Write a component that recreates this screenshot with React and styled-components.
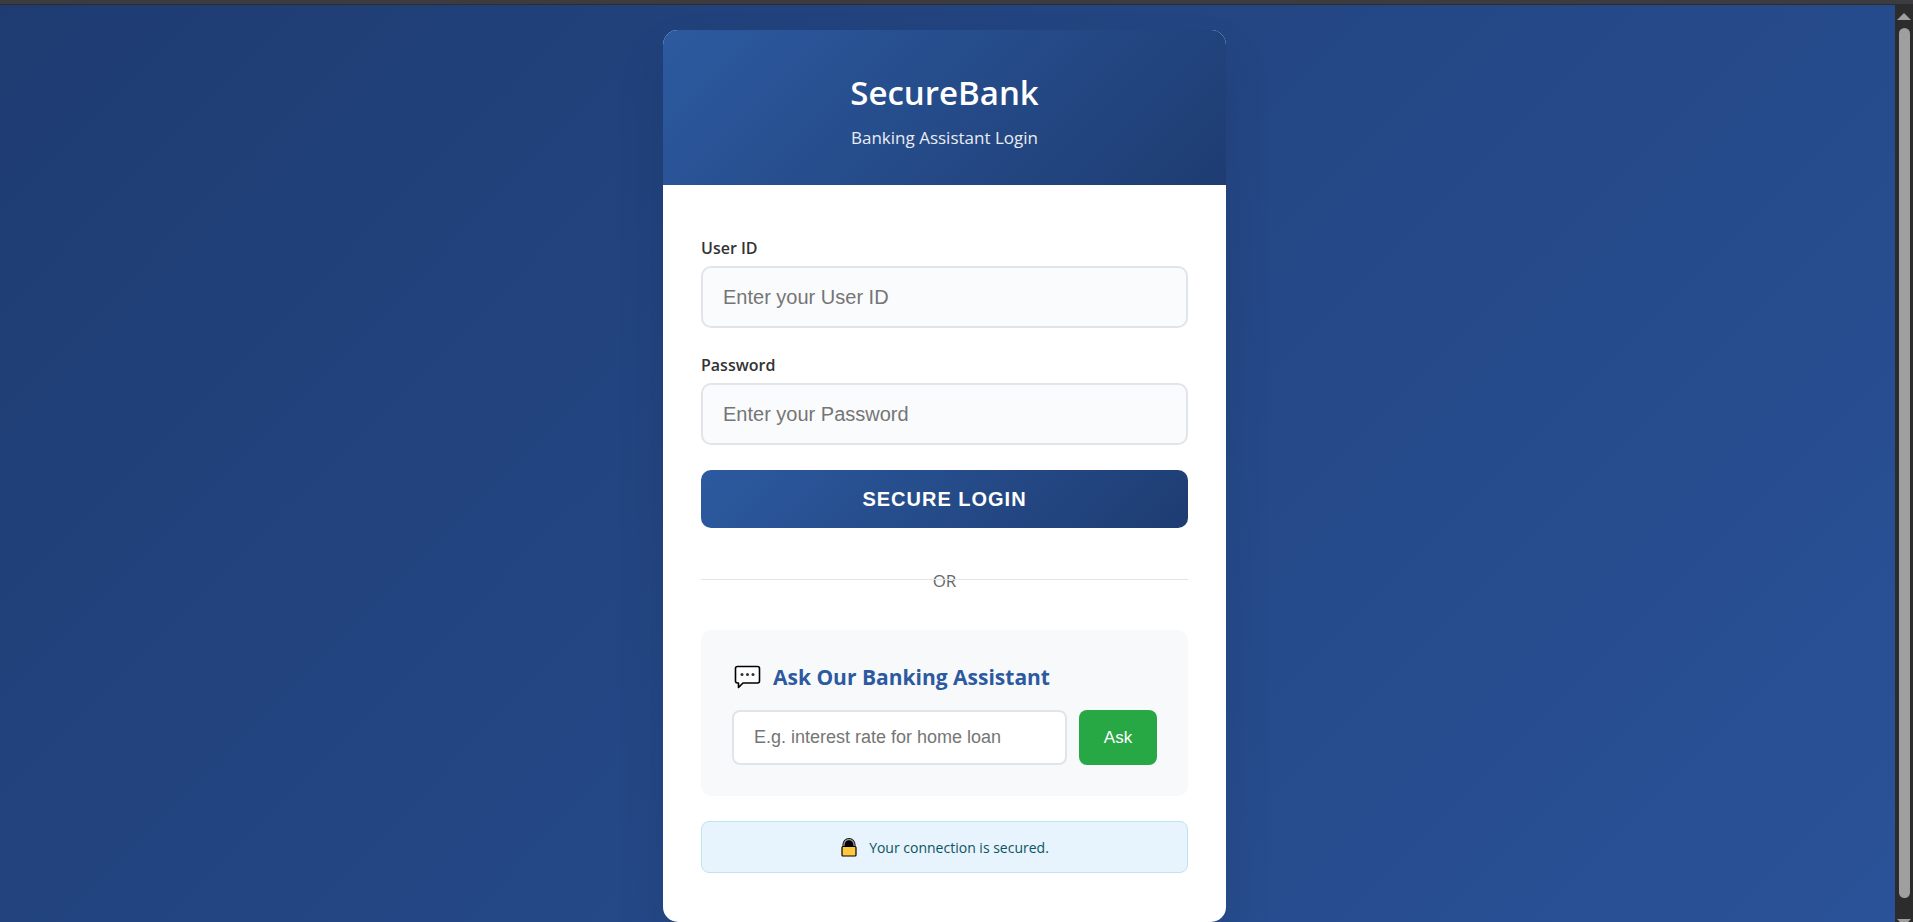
import React from "react";
import styled, { createGlobalStyle } from "styled-components";

const GlobalStyle = createGlobalStyle`
  *, *::before, *::after { box-sizing: border-box; }
  body {
    margin: 0;
    font-family: "Segoe UI", "Open Sans", "Noto Sans", sans-serif;
    color: #333;
  }
  h1, h2, p { margin: 0; }
`;

const Frame = styled.div`
  display: flex;
  flex-direction: column;
  min-height: 100vh;
`;

const TopEdge = styled.div`
  height: 5px;
  background: #3c3b40;
  border-bottom: 1px solid #2c2b2e;
`;

const Viewport = styled.div`
  flex: 1;
  display: flex;
`;

const Page = styled.main`
  flex: 1;
  display: flex;
  justify-content: center;
  align-items: flex-start;
  padding: 25px 6px 0 0;
  background: linear-gradient(135deg, #1e3c72 0%, #2a5298 100%);
`;

const ScrollTrack = styled.div`
  width: 18px;
  display: flex;
  flex-direction: column;
  align-items: center;
  gap: 8px;
  padding-top: 8px;
  background: #2c2c2c;
`;

const ScrollThumb = styled.div`
  flex: 1;
  width: 11px;
  margin-bottom: 13px;
  border-radius: 6px;
  background: #9f9f9f;
`;

const ScrollEnd = styled.div`
  height: 3px;
  overflow: hidden;
  svg { display: block; }
`;

const Card = styled.section`
  width: 100%;
  max-width: 563px;
  overflow: hidden;
  border-radius: 15px;
  background: #fff;
  box-shadow: 0 25px 50px rgba(0, 0, 0, 0.1);
`;

const CardHeader = styled.header`
  padding: 38px 38px 35px;
  text-align: center;
  color: #fff;
  background: linear-gradient(135deg, #2c5aa0 0%, #1e3c72 100%);
`;

const Brand = styled.h1`
  font-size: 33px;
  line-height: 50px;
  font-weight: 600;
`;

const Tagline = styled.p`
  font-size: 17px;
  line-height: 24px;
  margin-top: 8px;
  opacity: 0.9;
`;

const CardBody = styled.div`
  padding: 51px 38px 49px;
`;

const Field = styled.div`
  display: flex;
  flex-direction: column;
  gap: 6px;
  margin-bottom: 25px;
`;

const Label = styled.label`
  font-size: 16px;
  line-height: 24px;
  font-weight: 600;
`;

const TextInput = styled.input`
  width: 100%;
  min-width: 0;
  height: ${(p) => (p.$compact ? 55 : 62)}px;
  padding: 0 20px;
  border: 2px solid #e1e5e9;
  border-radius: ${(p) => (p.$compact ? 8 : 10)}px;
  background: ${(p) => (p.$compact ? "#fff" : "#fafbfc")};
  font-family: "Liberation Sans", Arial, sans-serif;
  font-size: ${(p) => (p.$compact ? 18 : 20)}px;
  color: #333;
  &::placeholder { color: #757575; opacity: 1; }
`;

const LoginButton = styled.button`
  width: 100%;
  height: 58px;
  border: 0;
  border-radius: 10px;
  color: #fff;
  background: linear-gradient(135deg, #2c5aa0 0%, #1e3c72 100%);
  font: 700 20px "Liberation Sans", Arial, sans-serif;
  letter-spacing: 1px;
  text-transform: uppercase;
  cursor: pointer;
`;

const Divider = styled.div`
  position: relative;
  margin: 38px 0;
  padding-top: 4px;
  font-size: 17px;
  line-height: 22px;
  text-align: center;
  color: #666;
  &::before {
    content: "";
    position: absolute;
    top: 50%;
    left: 0;
    right: 0;
    height: 1px;
    background: #e1e5e9;
  }
`;

const Assistant = styled.section`
  padding: 31px;
  border-radius: 10px;
  background: #f8f9fb;
`;

const AssistantTitle = styled.h2`
  display: flex;
  align-items: center;
  gap: 11px;
  margin-bottom: 17px;
  font-size: 21px;
  line-height: 32px;
  font-weight: 700;
  color: #2c5aa0;
`;

const AskRow = styled.form`
  display: flex;
  gap: 12px;
`;

const AskButton = styled.button`
  flex: none;
  width: 78px;
  border: 0;
  border-radius: 8px;
  color: #fff;
  background: #28a745;
  font: 17px "Liberation Sans", Arial, sans-serif;
  cursor: pointer;
`;

const Notice = styled.p`
  display: flex;
  align-items: center;
  justify-content: center;
  gap: 11px;
  height: 52px;
  margin-top: 25px;
  border: 1px solid #bee5eb;
  border-radius: 8px;
  background: #e7f3fd;
  font-size: 14px;
  color: #0c5460;
`;

function ChatIcon() {
  return (
    <svg width="30" height="26" viewBox="0 0 30 26" fill="none" aria-hidden="true">
      <path
        d="M5.500 2.500H25.500Q27.500 2.500 27.500 4.500V17Q27.500 19 25.500 19H11L6.500 23.500V19H5.500Q3.500 19 3.500 17V4.500Q3.500 2.500 5.500 2.500Z"
        fill="#fff" stroke="#000" strokeWidth="1.600" strokeLinejoin="round"
      />
      <circle cx="10" cy="10.500" r="1.500" fill="#333" />
      <circle cx="15.500" cy="10.500" r="1.500" fill="#333" />
      <circle cx="21" cy="10.500" r="1.500" fill="#333" />
    </svg>
  );
}

function LockIcon() {
  return (
    <svg width="18" height="20" viewBox="0 0 18 20" aria-hidden="true">
      <path d="M2.500 10V7.500a6.500 6.500 0 0 1 13 0V10Z" fill="#000" />
      <path d="M4 10V7.500a5 5 0 0 1 10 0V10" fill="none" stroke="#9a9a9a" strokeWidth="1.300" />
      <rect x="2" y="9.500" width="14" height="9.500" rx="1" fill="#ffc83d" stroke="#000" strokeWidth="1.200" />
    </svg>
  );
}

function ArrowIcon({ down }) {
  return (
    <svg width="14" height="7" viewBox="0 0 14 7" aria-hidden="true">
      <path d={down ? "M0 0H14L7 7Z" : "M0 7H14L7 0Z"} fill="#9f9f9f" />
    </svg>
  );
}

export default function App() {
  return (
    <Frame>
      <GlobalStyle />
      <TopEdge />
      <Viewport>
        <Page>
          <Card>
            <CardHeader>
              <Brand>SecureBank</Brand>
              <Tagline>Banking Assistant Login</Tagline>
            </CardHeader>
            <CardBody>
              <form onSubmit={(e) => e.preventDefault()}>
                <Field>
                  <Label htmlFor="user-id">User ID</Label>
                  <TextInput id="user-id" type="text" placeholder="Enter your User ID" />
                </Field>
                <Field>
                  <Label htmlFor="password">Password</Label>
                  <TextInput id="password" type="password" placeholder="Enter your Password" />
                </Field>
                <LoginButton type="submit">Secure Login</LoginButton>
              </form>
              <Divider><span>OR</span></Divider>
              <Assistant>
                <AssistantTitle>
                  <ChatIcon />
                  <span id="ask-title">Ask Our Banking Assistant</span>
                </AssistantTitle>
                <AskRow onSubmit={(e) => e.preventDefault()}>
                  <TextInput
                    $compact
                    type="text"
                    aria-labelledby="ask-title"
                    placeholder="E.g. interest rate for home loan"
                  />
                  <AskButton type="submit">Ask</AskButton>
                </AskRow>
              </Assistant>
              <Notice>
                <LockIcon />
                <span>Your connection is secured.</span>
              </Notice>
            </CardBody>
          </Card>
        </Page>
        <ScrollTrack aria-hidden="true">
          <ArrowIcon />
          <ScrollThumb />
          <ScrollEnd><ArrowIcon down /></ScrollEnd>
        </ScrollTrack>
      </Viewport>
    </Frame>
  );
}
